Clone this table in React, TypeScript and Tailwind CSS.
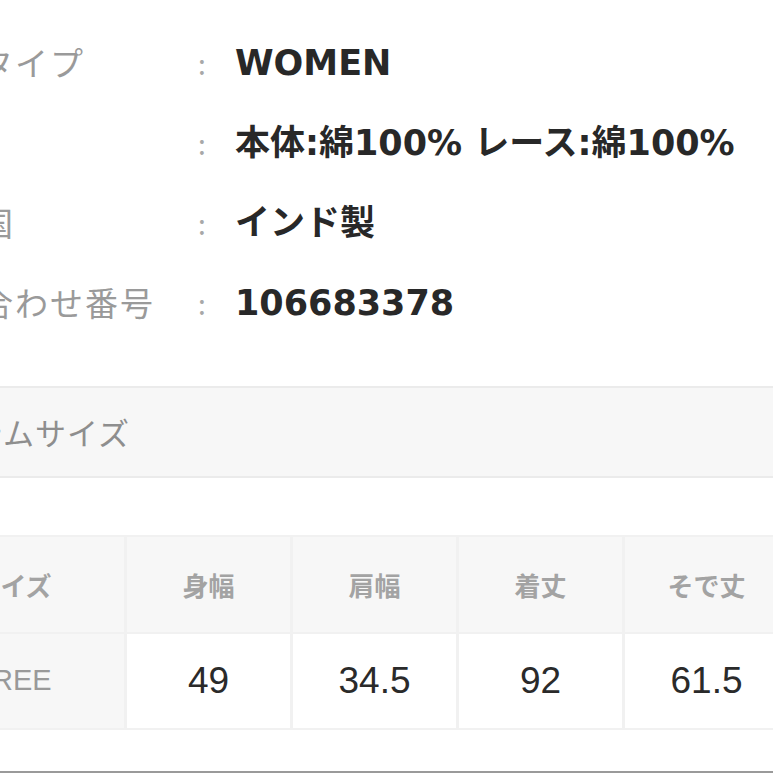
import React from 'react';

const specs = [
  { label: '商品タイプ', value: 'WOMEN' },
  { label: '素材', value: '本体:綿100% レース:綿100%' },
  { label: '原産国', value: 'インド製' },
  { label: '問い合わせ番号', value: '106683378' },
];

const heads = ['身幅', '肩幅', '着丈', 'そで丈'];
const sizes = ['49', '34.5', '92', '61.5'];

const jp = { fontFamily: '"Noto Sans CJK JP", "Noto Sans", sans-serif' };
const val = { fontFamily: '"DejaVu Sans", "Noto Sans CJK JP", sans-serif' };
const num = { fontFamily: '"Liberation Sans", "Noto Sans CJK JP", sans-serif' };

export default function App() {
  return (
    <div className="w-[773px] h-[773px] overflow-hidden bg-white flex flex-col" style={jp}>
      <div className="ml-[-90px] flex flex-col">
        {/* spec list */}
        <div className="pt-[23px] flex flex-col">
          {specs.map((s) => (
            <div key={s.label} className="h-[80px] flex items-center">
              <div className="w-[288px] shrink-0 text-[33px] text-[#9a9a9a] tracking-[2px] whitespace-nowrap">
                {s.label}
              </div>
              <div className="w-[37px] shrink-0 text-[28px] text-[#a8a8a8]">:</div>
              <div className="text-[35px] font-bold text-[#282828] whitespace-nowrap" style={val}>
                {s.value}
              </div>
            </div>
          ))}
        </div>

        {/* section header */}
        <div className="mt-[43px] h-[92px] flex items-center bg-[#f7f7f7] border-y-2 border-[#ebebeb]">
          <span className="text-[31px] tracking-[1px] text-[#8e8e8e] whitespace-nowrap">アイテムサイズ</span>
        </div>

        {/* size table */}
        <div className="mt-[57px] ml-[-10px] w-[900px] p-[2px] bg-[#f1f1f1] flex flex-col gap-[2px]">
          <div className="flex gap-[3px] h-[95px]">
            <div className="w-[222px] shrink-0 bg-[#f7f7f7] flex items-center justify-center text-[26px] font-bold text-[#a3a3a3]">
              サイズ
            </div>
            {heads.map((h) => (
              <div key={h} className="w-[163px] shrink-0 bg-[#f7f7f7] flex items-center justify-center text-[26px] font-bold text-[#a3a3a3]">
                {h}
              </div>
            ))}
          </div>
          <div className="flex gap-[3px] h-[94px]">
            <div className="w-[222px] shrink-0 bg-[#f7f7f7] flex items-center justify-center text-[29px] text-[#999]" style={num}>
              FREE
            </div>
            {sizes.map((v, i) => (
              <div key={i} className="w-[163px] shrink-0 bg-white flex items-center justify-center text-[37px] text-[#2a2a2a]" style={num}>
                {v}
              </div>
            ))}
          </div>
        </div>
      </div>
      <div className="mt-auto h-[2px] bg-[#9a9a9a]" />
    </div>
  );
}
